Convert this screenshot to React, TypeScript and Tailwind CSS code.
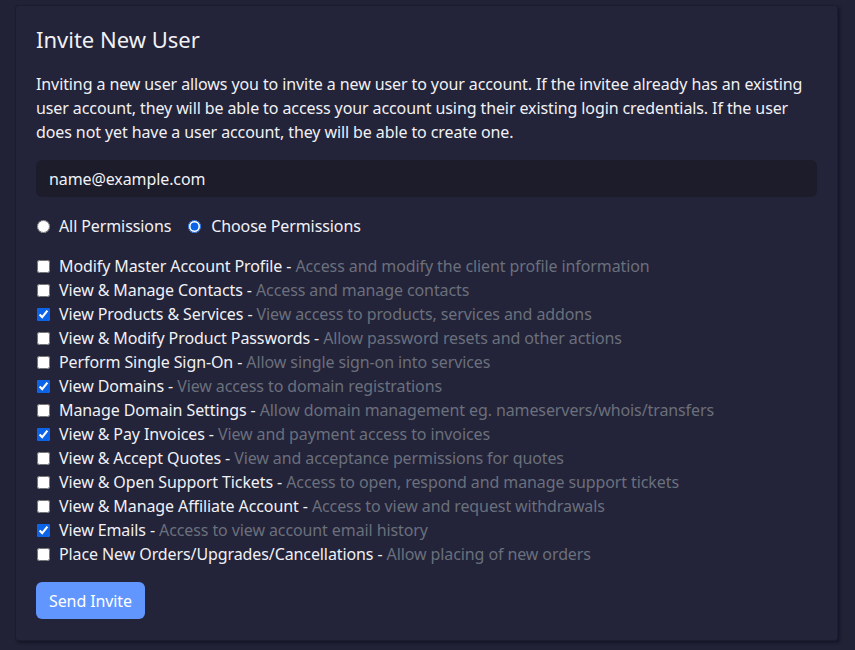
import { useState } from 'react';

const perms = [
  { label: 'Modify Master Account Profile', desc: 'Access and modify the client profile information', on: false },
  { label: 'View & Manage Contacts', desc: 'Access and manage contacts', on: false },
  { label: 'View Products & Services', desc: 'View access to products, services and addons', on: true },
  { label: 'View & Modify Product Passwords', desc: 'Allow password resets and other actions', on: false },
  { label: 'Perform Single Sign-On', desc: 'Allow single sign-on into services', on: false },
  { label: 'View Domains', desc: 'View access to domain registrations', on: true },
  { label: 'Manage Domain Settings', desc: 'Allow domain management eg. nameservers/whois/transfers', on: false },
  { label: 'View & Pay Invoices', desc: 'View and payment access to invoices', on: true },
  { label: 'View & Accept Quotes', desc: 'View and acceptance permissions for quotes', on: false },
  { label: 'View & Open Support Tickets', desc: 'Access to open, respond and manage support tickets', on: false },
  { label: 'View & Manage Affiliate Account', desc: 'Access to view and request withdrawals', on: false },
  { label: 'View Emails', desc: 'Access to view account email history', on: true },
  { label: 'Place New Orders/Upgrades/Cancellations', desc: 'Allow placing of new orders', on: false },
];

export default function App() {
  const [mode, setMode] = useState<'all' | 'choose'>('choose');
  const [checked, setChecked] = useState(perms.map((p) => p.on));

  return (
    <div
      className="min-h-[650px] bg-[#222237] pt-[5px] pl-[15px] pr-[17px] pb-[9px] tracking-[-0.1px] text-[#f1f1f5]"
      style={{ fontFamily: '"Noto Sans", "Open Sans", sans-serif' }}
    >
      <div className="rounded-[3px] border border-[#1c1c2e] bg-[#232339] px-5 pt-5 pb-[21px] shadow-[2px_2px_3px_rgba(10,10,25,0.5)]">
        {/* Header */}
        <h2 className="text-[22px] leading-[26px] font-normal tracking-normal">Invite New User</h2>
        <p className="mt-5 text-base leading-6">
          Inviting a new user allows you to invite a new user to your account. If the invitee already has an existing
          user account, they will be able to access your account using their existing login credentials. If the user
          does not yet have a user account, they will be able to create one.
        </p>

        {/* Email */}
        <input
          defaultValue="name@example.com"
          className="mt-4 block h-[37px] w-full rounded-md bg-[#1c1c2b] px-[13px] text-base text-[#f1f1f5] outline-none"
        />

        {/* Mode */}
        <div className="mt-[17px] flex h-6 items-center">
          <label className="flex items-center">
            <input
              type="radio"
              name="mode"
              checked={mode === 'all'}
              onChange={() => setMode('all')}
              className="m-0 ml-[1px] h-[13px] w-[13px] accent-[#0b63e8]"
            />
            <span className="ml-[9px]">All Permissions</span>
          </label>
          <label className="ml-[17px] flex items-center">
            <input
              type="radio"
              name="mode"
              checked={mode === 'choose'}
              onChange={() => setMode('choose')}
              className="m-0 h-[13px] w-[13px] accent-[#0b63e8]"
            />
            <span className="ml-[10px]">Choose Permissions</span>
          </label>
        </div>

        {/* Permissions */}
        <div className="mt-4 flex flex-col">
          {perms.map((p, i) => (
            <label key={p.label} className="flex h-6 items-center">
              <input
                type="checkbox"
                checked={checked[i]}
                onChange={() => setChecked((prev) => prev.map((v, j) => (j === i ? !v : v)))}
                className="m-0 ml-[1px] h-[13px] w-[13px] accent-[#0b63e8]"
              />
              <span className="ml-[9px] whitespace-nowrap">
                {p.label} - <span className="text-[#6a707c]">{p.desc}</span>
              </span>
            </label>
          ))}
        </div>

        <button className="mt-4 h-[37px] rounded-md bg-[#6196ff] px-[13px] text-base text-white">Send Invite</button>
      </div>
    </div>
  );
}
